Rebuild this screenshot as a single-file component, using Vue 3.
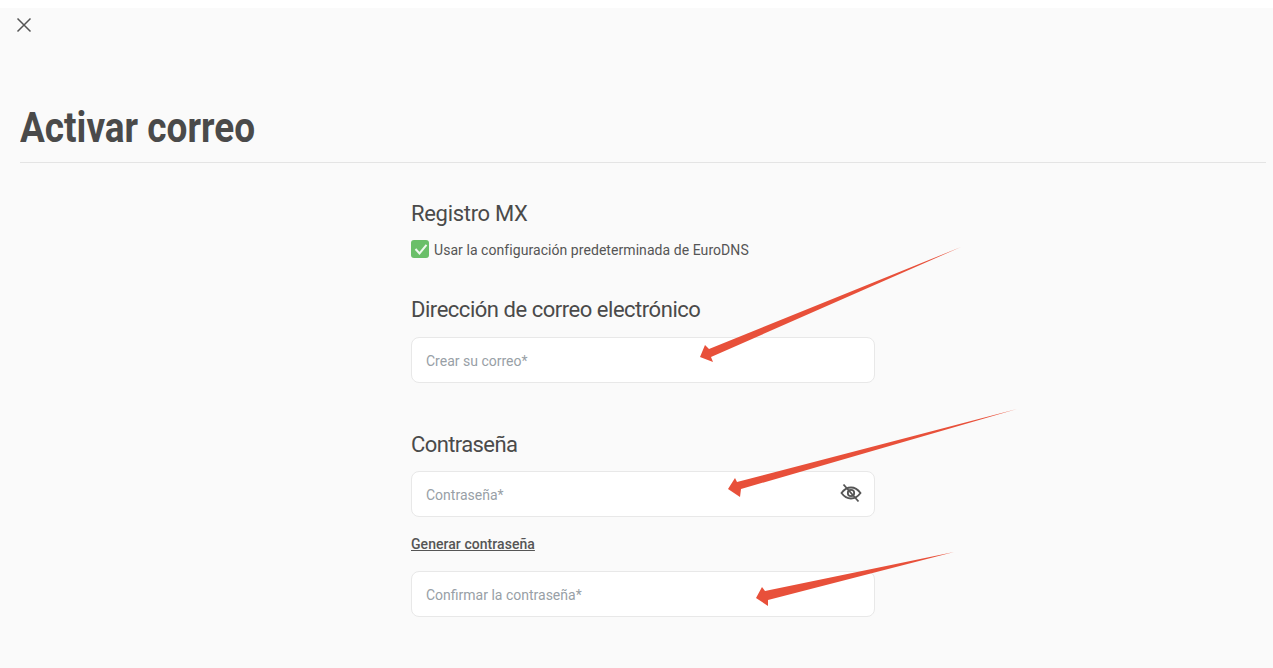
<script setup>
const arrows = [
  '961,247 709,349 705,345 700,357 713,362 711,357',
  '1017,409 737,482 735,478 728,489 740,497 741,489',
  '954,552 765,591 762,587 756,598 768,606 768,600',
]
</script>

<template>
  <main class="page">
    <button class="close" type="button" aria-label="Cerrar">
      <svg width="16" height="16" viewBox="0 0 16 16"><path d="M1.5 1.5 14.5 14.5M14.5 1.5 1.5 14.5" /></svg>
    </button>
    <h1 class="title"><span>Activar correo</span></h1>
    <form class="form">
      <h2 class="heading first">Registro MX</h2>
      <label class="check">
        <span class="box">
          <svg width="18" height="18" viewBox="0 0 18 18"><path d="M4.500 9 8.500 13.500 15.500 4.800" /></svg>
        </span>
        <span class="check-label">Usar la configuración predeterminada de EuroDNS</span>
      </label>
      <h2 class="heading second">Dirección de correo electrónico</h2>
      <div class="field"><span class="hint">Crear su correo*</span></div>
      <h2 class="heading third">Contraseña</h2>
      <div class="field">
        <span class="hint">Contraseña*</span>
        <svg class="eye" width="22" height="22" viewBox="0 0 22 22">
          <path d="M1.500 11C4.200 7.300 7.300 5.500 11 5.500S17.800 7.300 20.500 11C17.800 14.700 14.700 16.500 11 16.500S4.200 14.700 1.500 11Z" />
          <circle cx="11" cy="11" r="3.200" />
          <path class="slash" d="M3.500 2.500 18.500 19.500" />
        </svg>
      </div>
      <a class="generate" href="#">Generar contraseña</a>
      <div class="field"><span class="hint">Confirmar la contraseña*</span></div>
    </form>
    <svg class="arrows" width="1273" height="668" viewBox="0 0 1273 668" aria-hidden="true">
      <polygon v-for="a in arrows" :key="a" :points="a" />
    </svg>
  </main>
</template>

<style>
html, body { margin: 0; background: #fff; }
</style>

<style scoped>
.page {
  position: relative;
  box-sizing: border-box;
  height: 660px;
  margin-top: 8px;
  padding: 0 7px 0 20px;
  background: #fafafa;
  color: #4a4a4a;
  font-family: Roboto, "Liberation Sans", sans-serif;
  overflow: hidden;
}
.close {
  display: block;
  width: 16px;
  height: 16px;
  margin: 9px 0 0 -4px;
  padding: 0;
  border: 0;
  background: none;
}
.close svg { display: block; }
.close path { fill: none; stroke: #555; stroke-width: 1.5; }
.title {
  margin: 66px 0 0;
  padding-bottom: 10px;
  height: 53px;
  border-bottom: 1px solid #e4e4e4;
  font-size: 42px;
  line-height: 58px;
  font-weight: 700;
  color: #4a4a4a;
}
.title span {
  display: inline-block;
  transform: scaleX(0.88);
  transform-origin: left center;
}
.form {
  display: flex;
  flex-direction: column;
  width: 464px;
  margin-left: 391px;
}
.heading {
  margin: 0;
  font-size: 22px;
  line-height: 28px;
  font-weight: 400;
  color: #4a4a4a;
}
.first { margin-top: 37px; letter-spacing: -0.3px; }
.second { margin-top: 38px; letter-spacing: -0.47px; }
.third { margin-top: 48px; letter-spacing: -0.6px; }
.check {
  display: flex;
  align-items: center;
  gap: 5px;
  margin-top: 12px;
  height: 18px;
  font-size: 14px;
  letter-spacing: 0.06px;
  color: #555;
}
.check-label { padding-top: 2px; }
.box {
  width: 18px;
  height: 18px;
  border-radius: 3px;
  background: #6abf69;
}
.box svg { display: block; }
.box path { fill: none; stroke: #eef8ee; stroke-width: 2; }
.field {
  position: relative;
  display: flex;
  align-items: center;
  box-sizing: border-box;
  height: 46px;
  margin-top: 12px;
  padding: 2px 14px 0;
  border: 1px solid #e8e8e8;
  border-radius: 8px;
  background: #fff;
  font-size: 14px;
}
.second + .field { margin-top: 13px; }
.hint { color: #98a0a6; }
.eye { position: absolute; right: 12px; top: 10px; }
.eye path, .eye circle { fill: none; stroke: #555; stroke-width: 1.8; }
.generate {
  margin-top: 18px;
  font-size: 14px;
  line-height: 18px;
  font-weight: 500;
  letter-spacing: 0.05px;
  color: #555;
  text-decoration: underline;
}
.generate + .field { margin-top: 18px; }
.arrows { position: absolute; left: 0; top: -8px; pointer-events: none; }
.arrows polygon { fill: #e8503a; }
</style>
